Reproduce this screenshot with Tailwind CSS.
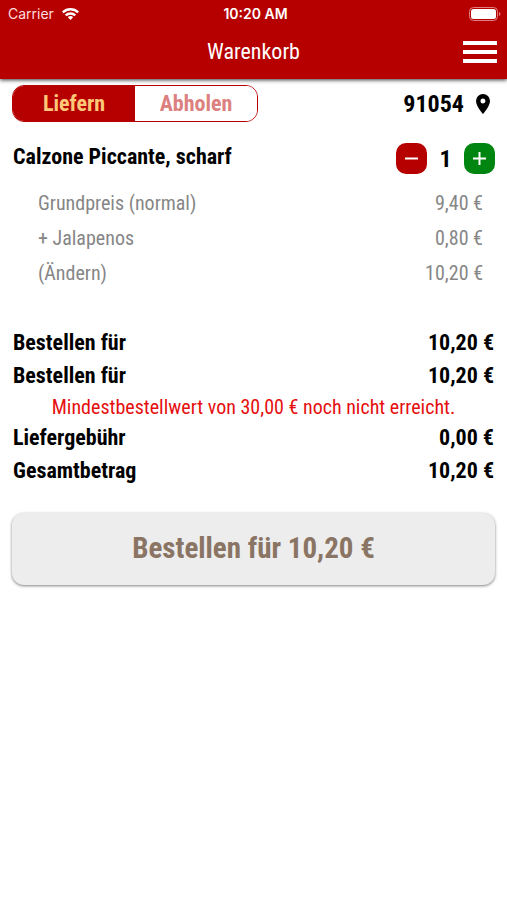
<!DOCTYPE html>
<html lang="de">
<head>
  <meta charset="UTF-8" />
  <meta name="viewport" content="width=device-width, initial-scale=1.0"/>
  <title>Warenkorb</title>
  <script src="https://cdn.jsdelivr.net/npm/@tailwindcss/browser@4"></script>
</head>
<body class="bg-white text-black min-h-screen font-['Roboto_Condensed',Roboto,sans-serif]">

  <!-- Header -->
  <header class="bg-[#b60000] text-white shadow-[0_1px_4px_rgba(0,0,0,0.8)]">
    <!-- Status Bar -->
    <div class="grid grid-cols-3 items-center h-7 pl-2 pr-1 text-sm font-[Inter,sans-serif]">
      <div class="flex items-center gap-2 text-[#ffdddd]">
        <span>Carrier</span>
        <svg class="w-[17px] h-3 text-white" viewBox="0 0 17 12" fill="none" stroke="currentColor" stroke-width="2.4">
          <path d="M.8 4.400a11 11 0 0 1 15.400 0" />
          <path d="M3.700 7.400a7 7 0 0 1 9.600 0" />
          <path d="M8.500 12L5.800 9.300a3.900 3.900 0 0 1 5.400 0z" fill="currentColor" stroke="none" />
        </svg>
      </div>
      <span class="text-center font-semibold">10:20 AM</span>
      <svg class="justify-self-end w-[34px] h-[14px]" viewBox="0 0 34 14" fill="none">
        <rect x="0.500" y="0.500" width="28" height="13" rx="4" stroke="#e08080" />
        <rect x="2" y="2" width="25" height="10" rx="2.500" fill="white" />
        <path d="M30 5v4q1.500-.7 1.500-2T30 5z" fill="#e08080" />
      </svg>
    </div>
    <!-- Title Bar -->
    <div class="grid grid-cols-[1fr_auto_1fr] items-center h-[51px] px-[10px] pb-1">
      <h1 class="col-start-2 text-[22px]">Warenkorb</h1>
      <button type="button" aria-label="Menü" class="justify-self-end">
        <svg class="w-[34px] h-6" viewBox="0 0 34 24" fill="white">
          <rect y="1" width="34" height="4" />
          <rect y="10" width="34" height="4" />
          <rect y="19" width="34" height="4" />
        </svg>
      </button>
    </div>
  </header>

  <main class="px-3 pt-[6px]">

    <!-- Delivery / Pickup -->
    <div class="flex items-center justify-between">
      <div class="grid grid-cols-2 w-[246px] h-[37px] rounded-xl border border-[#b60000] overflow-hidden text-[22px] font-bold">
        <button type="button" aria-pressed="true" class="bg-[#b60000] text-[#ffc878]">Liefern</button>
        <button type="button" aria-pressed="false" class="bg-white text-[#dc8080]">Abholen</button>
      </div>
      <button type="button" class="flex items-center gap-3 pr-[5px] text-2xl font-bold">
        <span>91054</span>
        <svg class="w-[14px] h-5" viewBox="0 0 14 20">
          <path d="M7 0a7 7 0 0 0-7 7c0 5.200 7 13 7 13s7-7.800 7-13a7 7 0 0 0-7-7zm0 9.500a2.500 2.500 0 1 1 0-5 2.500 2.500 0 0 1 0 5z" />
        </svg>
      </button>
    </div>

    <!-- Cart Item -->
    <section class="pt-[18px]">
      <div class="flex items-center justify-between pl-px">
        <h2 class="pb-1 text-[22px] font-bold">Calzone Piccante, scharf</h2>
        <div class="flex items-center">
          <button type="button" aria-label="Weniger" class="grid place-items-center size-[31px] rounded-[10px] bg-[#b60000]">
            <svg class="size-[13px]" viewBox="0 0 13 13" stroke="white" stroke-width="2"><path d="M0 6.500h13" /></svg>
          </button>
          <output class="w-[37px] text-center text-2xl font-bold">1</output>
          <button type="button" aria-label="Mehr" class="grid place-items-center size-[31px] rounded-[10px] bg-[#008510]">
            <svg class="size-[13px]" viewBox="0 0 13 13" stroke="white" stroke-width="2"><path d="M0 6.500h13M6.500 0v13" /></svg>
          </button>
        </div>
      </div>
      <table class="w-full mt-2 text-xl text-[#868686]">
        <tbody>
          <tr class="h-[35px]"><td class="pl-[26px]">Grundpreis (normal)</td><td class="pr-3 text-right">9,40 €</td></tr>
          <tr class="h-[35px]"><td class="pl-[26px]">+ Jalapenos</td><td class="pr-3 text-right">0,80 €</td></tr>
          <tr class="h-[35px]"><td class="pl-[26px]"><a href="#">(Ändern)</a></td><td class="pr-3 text-right">10,20 €</td></tr>
        </tbody>
      </table>
    </section>

    <!-- Totals -->
    <table class="w-full mt-9 text-[22px] font-bold">
      <tbody>
        <tr class="h-[33px]"><td class="pl-px">Bestellen für</td><td class="pr-px text-right">10,20 €</td></tr>
        <tr class="h-[33px]"><td class="pl-px">Bestellen für</td><td class="pr-px text-right">10,20 €</td></tr>
        <tr class="h-[29px]"><td colspan="2" class="text-center text-xl font-normal text-[#e50f0f]">Mindestbestellwert von 30,00 € noch nicht erreicht.</td></tr>
        <tr class="h-[33px]"><td class="pl-px">Liefergebühr</td><td class="pr-px text-right">0,00 €</td></tr>
        <tr class="h-[33px]"><td class="pl-px">Gesamtbetrag</td><td class="pr-px text-right">10,20 €</td></tr>
      </tbody>
    </table>

    <button type="button" class="w-full h-[72px] mt-[26px] rounded-xl bg-[#ededed] text-[#8a7464] text-[29px] font-bold shadow-[0_1px_3px_rgba(0,0,0,0.5)]">Bestellen für 10,20 €</button>
  </main>

</body>
</html>
